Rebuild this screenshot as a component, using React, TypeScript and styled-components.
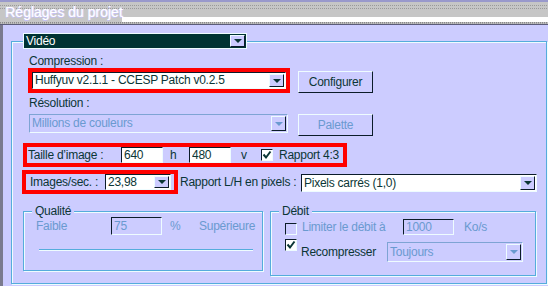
import React from 'react';
import styled, { createGlobalStyle } from 'styled-components';

const LAV = '#ccccff';
const INK = '#0b3636';
const DIM = '#6a9ad0';
const LINE = '#55acdc';
const GLOW = '#eefcff';
const DARK = '#0b1c2a';

const GlobalStyle = createGlobalStyle`
  html, body {
    margin: 0;
    padding: 0;
    background: ${LAV};
  }
  body {
    font-family: "Liberation Sans", Arial, sans-serif;
    font-size: 12px;
    letter-spacing: -0.25px;
    color: ${INK};
  }
`;

const Window = styled.div`
  width: 548px;
  height: 286px;
  display: flex;
  flex-direction: column;
  overflow: hidden;
  background: ${LAV};
`;

const dots = (y: number, c = '#9a9a9a') =>
  `repeating-linear-gradient(90deg, ${c} 0 1px, transparent 1px 2px) 0 ${y}px / 100% 1px no-repeat`;

const TitleBar = styled.div`
  height: 25px;
  display: flex;
  background:
    ${dots(22, '#8a8a8a')},
    ${dots(23, '#a4a4a4')},
    linear-gradient(to bottom, #9999cc 0 2px, #c6c6c6 2px 22px, #c0c0c0 22px 24px, #5c5c7a 24px 25px);
`;

const TitleTab = styled.div`
  width: 122px;
  box-sizing: border-box;
  padding: 4px 0 0 5px;
  background: ${dots(5)}, ${dots(8)};
`;

const TitleRest = styled.div`
  flex: 1;
  background:
    ${dots(5)},
    ${dots(8)},
    linear-gradient(to bottom, transparent 0 17px, #ffffff 17px 22px, transparent 22px);
`;

const Title = styled.div`
  font-size: 14px;
  line-height: 16px;
  letter-spacing: 0;
  color: #ffffff;
  white-space: nowrap;
  text-shadow: 1px 0 0 #dcd8ff, 0 1px 0 #c4c0f4;
`;

const Body = styled.div`
  flex: 1;
  display: flex;
  min-height: 0;
`;

const SideStrip = styled.div`
  width: 3px;
  background: #7a7a8e;
`;

const Main = styled.div`
  flex: 1;
  display: flex;
  padding: 8px 1px 2px 8px;
  min-width: 0;
`;

const Frame = styled.fieldset`
  flex: 1;
  min-width: 0;
  margin: 0;
  padding: 0 0 0 11px;
  border: 1px solid ${LINE};
  box-shadow: inset 1px 1px 0 ${GLOW}, 1px 1px 0 ${GLOW};
`;

const FrameLegend = styled.legend`
  padding: 0;
  margin: 0;
  height: 16px;
`;

const Label = styled.div<{ $top: number; $left: number }>`
  line-height: 14px;
  height: 14px;
  margin: ${(p) => p.$top}px 0 0 ${(p) => p.$left}px;
  white-space: nowrap;
`;

const Row = styled.div<{ $top: number; $left: number }>`
  display: flex;
  align-items: flex-start;
  margin: ${(p) => p.$top}px 0 0 ${(p) => p.$left}px;
`;

const Highlight = styled.div<{ $pad?: string }>`
  display: flex;
  align-items: center;
  border: 4px solid #ff0000;
  padding: ${(p) => p.$pad || '0'};
`;

const Cell = styled.span<{ $w?: number; $pl?: number; $mt?: number; $off?: boolean }>`
  display: inline-block;
  box-sizing: border-box;
  width: ${(p) => (p.$w ? `${p.$w}px` : 'auto')};
  padding-left: ${(p) => p.$pl || 0}px;
  margin-top: ${(p) => p.$mt || 0}px;
  line-height: 14px;
  white-space: nowrap;
  color: ${(p) => (p.$off ? DIM : INK)};
`;

type Tone = 'dark' | 'field' | 'off';

const SelectBox = styled.div<{ $w: number; $h: number; $tone: Tone; $mt?: number }>`
  box-sizing: border-box;
  flex: none;
  width: ${(p) => p.$w}px;
  height: ${(p) => p.$h}px;
  margin-top: ${(p) => p.$mt || 0}px;
  display: flex;
  align-items: stretch;
  border: 1px solid;
  border-color: ${(p) =>
    p.$tone === 'dark'
      ? `${GLOW}`
      : p.$tone === 'off'
        ? `#7ea4d4 ${GLOW} ${GLOW} #7ea4d4`
        : `${DARK} ${GLOW} ${GLOW} ${DARK}`};
  background: ${(p) =>
    p.$tone === 'dark' ? '#003333' : p.$tone === 'off' ? LAV : '#ffffff'};
  color: ${(p) => (p.$tone === 'dark' ? '#ffffff' : p.$tone === 'off' ? DIM : INK)};
`;

const SelectValue = styled.span<{ $h: number }>`
  flex: 1;
  padding-left: 2px;
  line-height: ${(p) => p.$h - 2}px;
  white-space: nowrap;
  overflow: hidden;
`;

const SelectArrow = styled.span<{ $off?: boolean }>`
  width: 15px;
  margin: 1px 1px 1px 0;
  box-sizing: border-box;
  display: flex;
  align-items: center;
  justify-content: center;
  background: ${LAV};
  border: 1px solid;
  border-color: ${GLOW} ${DARK} ${DARK} ${GLOW};

  &::after {
    content: '';
    border-left: 4px solid transparent;
    border-right: 4px solid transparent;
    border-top: 4px solid ${(p) => (p.$off ? DIM : INK)};
  }
`;

const Select = ({
  value,
  w,
  h,
  mt,
  tone = 'field',
}: {
  value: string;
  w: number;
  h: number;
  mt?: number;
  tone?: Tone;
}) => (
  <SelectBox $w={w} $h={h} $tone={tone} $mt={mt}>
    <SelectValue $h={h}>{value}</SelectValue>
    <SelectArrow $off={tone === 'off'} />
  </SelectBox>
);

const Button = styled.button<{ $off?: boolean; $left: number; $top?: number }>`
  width: 75px;
  height: 22px;
  box-sizing: border-box;
  margin: ${(p) => p.$top || 0}px 0 0 ${(p) => p.$left}px;
  padding: 0;
  font: inherit;
  letter-spacing: inherit;
  background: ${LAV};
  border: 1px solid;
  border-color: ${GLOW} ${DARK} ${DARK} ${GLOW};
  color: ${(p) => (p.$off ? DIM : INK)};
`;

const Field = styled.input<{ $w: number; $h: number; $off?: boolean }>`
  box-sizing: border-box;
  width: ${(p) => p.$w}px;
  height: ${(p) => p.$h}px;
  margin: 0;
  padding: 0 0 0 2px;
  font: inherit;
  letter-spacing: inherit;
  border: 1px solid;
  border-color: ${DARK} ${GLOW} ${GLOW} ${DARK};
  background: ${(p) => (p.$off ? LAV : '#ffffff')};
  color: ${(p) => (p.$off ? DIM : INK)};
  outline: none;
`;

const CheckBox = styled.span<{ $on?: boolean; $left?: number; $top?: number }>`
  box-sizing: border-box;
  width: 12px;
  height: 12px;
  flex: none;
  display: inline-flex;
  margin: ${(p) => p.$top || 0}px 0 0 ${(p) => p.$left || 0}px;
  border: 1px solid;
  border-color: ${DARK} ${GLOW} ${GLOW} ${DARK};
  background: ${(p) => (p.$on ? '#ffffff' : LAV)};
`;

const Check = ({ on, left, top }: { on?: boolean; left?: number; top?: number }) => (
  <CheckBox $on={on} $left={left} $top={top}>
    {on && (
      <svg width="10" height="10" viewBox="0 0 10 10">
        <path d="M1.5 4.5 L4 7.5 L8.5 1.5" fill="none" stroke={INK} strokeWidth="2" />
      </svg>
    )}
  </CheckBox>
);

const Groups = styled.div`
  display: flex;
  align-items: flex-start;
  gap: 7px;
  margin-top: 10px;
`;

const Group = styled.fieldset<{ $w: number; $pb: number }>`
  width: ${(p) => p.$w}px;
  box-sizing: border-box;
  margin: 0;
  padding: 0 0 ${(p) => p.$pb}px 8px;
  border: 1px solid ${LINE};
  box-shadow: inset 1px 1px 0 ${GLOW}, 1px 1px 0 ${GLOW};
`;

const GroupLegend = styled.legend`
  padding: 0 3px;
  line-height: 14px;
  background: ${LAV};
`;

const GroupRow = styled.div<{ $top: number; $align?: string }>`
  display: flex;
  align-items: ${(p) => p.$align || 'center'};
  margin-top: ${(p) => p.$top}px;
`;

const Track = styled.div`
  width: 214px;
  height: 1px;
  margin: 14px 0 0 7px;
  background: ${LINE};
  box-shadow: 0 1px 0 ${GLOW};
`;

export default function App() {
  return (
    <Window>
      <GlobalStyle />
      <TitleBar>
        <TitleTab>
          <Title>Réglages du projet</Title>
        </TitleTab>
        <TitleRest />
      </TitleBar>
      <Body>
        <SideStrip />
        <Main>
          <Frame>
            <FrameLegend>
              <Select value="Vidéo" w={224} h={16} tone="dark" />
            </FrameLegend>

            <Label $top={5} $left={6}>Compression :</Label>
            <Row $top={0} $left={5}>
              <Highlight>
                <Select value="Huffyuv v2.1.1 - CCESP Patch v0.2.5" w={254} h={17} />
              </Highlight>
              <Button $left={8} $top={3}>Configurer</Button>
            </Row>

            <Label $top={3} $left={6}>Résolution :</Label>
            <Row $top={4} $left={6}>
              <Select value="Millions de couleurs" w={259} h={19} tone="off" />
              <Button $left={10} $off>Palette</Button>
            </Row>

            <Row $top={7} $left={0}>
              <Highlight $pad="0 4px 0 1px">
                <Cell $w={93}>Taille d’image :</Cell>
                <Field $w={42} $h={16} defaultValue="640" readOnly />
                <Cell $w={26} $pl={7}>h</Cell>
                <Field $w={42} $h={16} defaultValue="480" readOnly />
                <Cell $w={30} $pl={10}>v</Cell>
                <Check on />
                <Cell $pl={6}>Rapport 4:3</Cell>
              </Highlight>
            </Row>

            <Row $top={3} $left={-1}>
              <Highlight $pad="0 3px 0 4px">
                <Cell $w={75}>Images/sec. :</Cell>
                <Select value="23,98" w={66} h={16} />
              </Highlight>
              <Cell $w={123} $pl={2} $mt={5}>
                Rapport L/H en pixels :
              </Cell>
              <Select value="Pixels carrés (1,0)" w={236} h={18} mt={4} />
            </Row>

            <Groups>
              <Group $w={240} $pb={20}>
                <GroupLegend>Qualité</GroupLegend>
                <GroupRow $top={-1}>
                  <Cell $w={79} $pl={4} $off>Faible</Cell>
                  <Field $w={51} $h={18} defaultValue="75" $off readOnly />
                  <Cell $w={37} $pl={8} $off>%</Cell>
                  <Cell $off>Supérieure</Cell>
                </GroupRow>
                <Track />
              </Group>

              <Group $w={266} $pb={13}>
                <GroupLegend>Débit</GroupLegend>
                <GroupRow $top={1}>
                  <Check left={6} top={3} />
                  <Cell $w={106} $pl={5} $off>Limiter le débit à</Cell>
                  <Field $w={51} $h={16} defaultValue="1000" $off readOnly />
                  <Cell $pl={10} $off>Ko/s</Cell>
                </GroupRow>
                <GroupRow $top={4} $align="flex-start">
                  <Check on left={6} />
                  <Cell $w={90} $pl={4} $mt={6}>Recompresser</Cell>
                  <Select value="Toujours" w={136} h={20} tone="off" mt={3} />
                </GroupRow>
              </Group>
            </Groups>
          </Frame>
        </Main>
      </Body>
    </Window>
  );
}
